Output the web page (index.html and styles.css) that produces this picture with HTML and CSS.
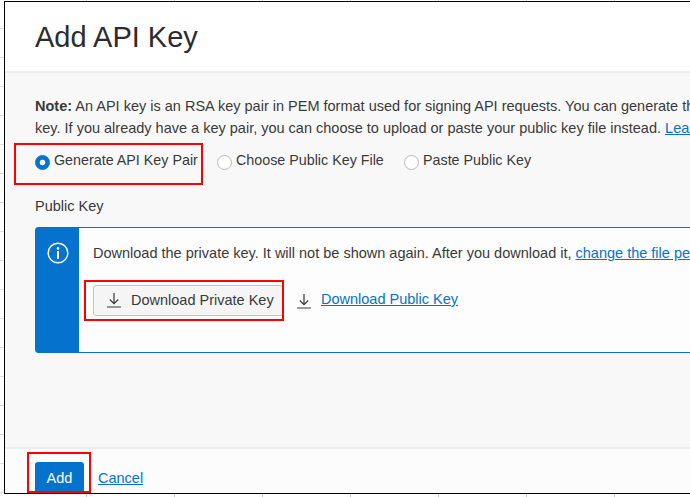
FILE: index.html

```html
<!DOCTYPE html>
<html lang="en">
<head>
    <meta charset="UTF-8">
    <title>Add API Key</title>
    <link rel="stylesheet" href="styles.css">
</head>
<body>
    <div class="dialog">
        <div class="dialog-header">
            <h1>Add API Key</h1>
        </div>
        <div class="dialog-body">
            <p class="note"><b>Note:</b> An API key is an RSA key pair in PEM format used for signing API requests. You can generate the</p>
            <p class="note">key. If you already have a key pair, you can choose to upload or paste your public key file instead. <a href="#">Learn more</a></p>
            <div class="radio-row">
                <label class="radio-item radio-first">
                    <span class="radio radio-on"></span>Generate API Key Pair
                    <span class="mark mark-radio"></span>
                </label>
                <label class="radio-item radio-second">
                    <span class="radio"></span>Choose Public Key File
                </label>
                <label class="radio-item">
                    <span class="radio"></span>Paste Public Key
                </label>
            </div>
            <div class="field-label">Public Key</div>
            <div class="panel">
                <div class="panel-strip">
                    <svg width="22" height="22" viewBox="0 0 22 22" fill="none">
                        <circle cx="11" cy="11" r="9.8" stroke="#fff" stroke-width="1.4"/>
                        <circle cx="11" cy="6.4" r="1.3" fill="#fff"/>
                        <rect x="10" y="9" width="2" height="8" fill="#fff"/>
                    </svg>
                </div>
                <div class="panel-content">
                    <p class="panel-text">Download the private key. It will not be shown again. After you download it, <a href="#">change the file permissions</a></p>
                    <div class="download-row">
                        <button class="btn-download">
                            <svg class="dl-icon" width="16" height="16" viewBox="0 0 16 16" fill="none" stroke="#3a3a3a" stroke-width="1.2">
                                <path d="M8 1v10.500M3.800 7.500L8 11.700l4.200-4.200M1 15h14"/>
                            </svg>
                            Download Private Key
                            <span class="mark mark-download"></span>
                        </button>
                        <svg class="dl-icon" width="16" height="16" viewBox="0 0 16 16" fill="none" stroke="#3a3a3a" stroke-width="1.2">
                            <path d="M8 1v10.500M3.800 7.500L8 11.700l4.200-4.200M1 15h14"/>
                        </svg>
                        <a href="#" class="dl-link">Download Public Key</a>
                    </div>
                </div>
            </div>
        </div>
        <div class="dialog-footer">
            <button class="btn-add">Add<span class="mark mark-add"></span></button>
            <a href="#" class="cancel">Cancel</a>
        </div>
    </div>
</body>
</html>
```

FILE: styles.css

```css
html, body {
    margin: 0;
    height: 497px;
    overflow: hidden;
}

body {
    font-family: "Liberation Sans", Arial, sans-serif;
    font-size: 14.5px;
    color: #3a3a3a;
    padding: 1px 0 0 4px;
    box-sizing: border-box;
    background-color: #fff;
    background-image:
        repeating-linear-gradient(to right, transparent 0 86px, #ccc 86px 87px, transparent 87px 88px),
        repeating-linear-gradient(to bottom, transparent 0 28px, #ddd 28px 29px);
}

a {
    color: #0572ce;
}

.dialog {
    width: 900px;
    height: 493px;
    box-sizing: border-box;
    border: 1px solid #000;
    border-width: 1px 0 1px 1px;
    display: flex;
    flex-direction: column;
    background-color: #f8f8f8;
    overflow: hidden;
}

.dialog-header {
    height: 71px;
    box-sizing: border-box;
    background-color: #fff;
    border-bottom: 2px solid #eee;
    padding: 17px 0 0 30px;
}

h1 {
    margin: 0;
    font-size: 29px;
    font-weight: normal;
    line-height: 36px;
    color: #2c2c2c;
}

.dialog-body {
    flex: 1;
    padding: 22px 0 0 30px;
}

.note {
    margin: 0;
    line-height: 22px;
    white-space: nowrap;
}

.radio-row {
    display: flex;
    margin-top: 11px;
    height: 22px;
    font-size: 14.3px;
    line-height: 20px;
}

.radio-item {
    position: relative;
    display: flex;
    align-items: flex-start;
}

.radio-first {
    width: 182px;
}

.radio-second {
    width: 187px;
}

.radio {
    width: 13px;
    height: 13px;
    margin: 5px 4px 0 0;
    border: 1px solid #b9b9b9;
    border-radius: 50%;
    background-color: #fff;
}

.radio-on {
    border-color: #0572ce;
    background: radial-gradient(circle, #fff 0 2.5px, #0572ce 3.2px);
}

.mark {
    position: absolute;
    box-sizing: border-box;
    border: 2px solid #f00;
    pointer-events: none;
}

.mark-radio {
    left: -21px;
    top: -7px;
    width: 189px;
    height: 42px;
}

.field-label {
    margin-top: 24px;
    line-height: 20px;
}

.panel {
    display: flex;
    height: 126px;
    box-sizing: border-box;
    margin-top: 11px;
    background-color: #fdfdfd;
    border: 1px solid #0572ce;
    border-radius: 3px;
}

.panel-strip {
    width: 43px;
    background-color: #0572ce;
    display: flex;
    justify-content: center;
    align-items: flex-start;
    padding-top: 14px;
    box-sizing: border-box;
}

.panel-content {
    flex: 1;
    padding: 15px 0 0 14px;
}

.panel-text {
    margin: 0;
    line-height: 20px;
    white-space: nowrap;
}

.download-row {
    display: flex;
    align-items: center;
    margin-top: 22px;
}

.btn-download {
    position: relative;
    display: flex;
    align-items: center;
    height: 31px;
    width: 190px;
    box-sizing: border-box;
    padding: 0 0 2px 12px;
    margin-right: 13px;
    border: 1px solid #c4c4c4;
    border-radius: 3px;
    background-color: #f5f5f5;
    color: #3a3a3a;
    font: inherit;
}

.btn-download .dl-icon {
    margin-right: 9px;
}

.mark-download {
    left: -10px;
    top: -6px;
    width: 200px;
    height: 41px;
}

.dl-link {
    margin: 0 0 3px 9px;
}

.dialog-footer {
    height: 46px;
    box-sizing: border-box;
    flex-shrink: 0;
    background-color: #fcfcfc;
    border-top: 2px solid #eee;
    padding: 13px 0 0 30px;
    display: flex;
    align-items: flex-start;
}

.btn-add {
    position: relative;
    width: 49px;
    height: 32px;
    flex-shrink: 0;
    border: none;
    border-radius: 3px;
    padding: 0;
    background-color: #0572ce;
    color: #fff;
    font: inherit;
}

.mark-add {
    left: -8px;
    top: -10px;
    width: 64px;
    height: 41px;
}

.cancel {
    margin: 7px 0 0 14px;
    line-height: 18px;
}
```
